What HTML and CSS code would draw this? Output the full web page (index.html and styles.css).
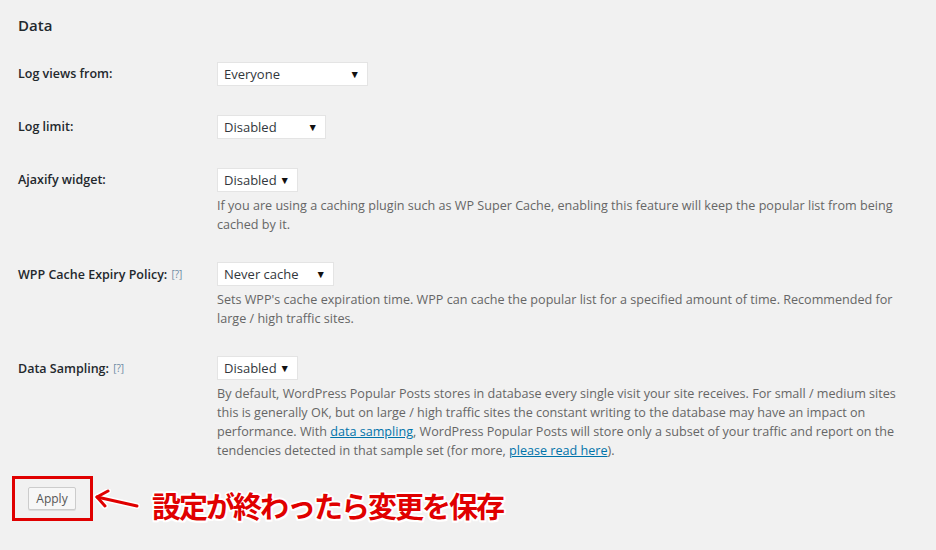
FILE: index.html
```html
<!DOCTYPE html>
<html lang="en">
<head>
<meta charset="utf-8">
<title>Data settings</title>
<link rel="stylesheet" href="styles.css">
</head>
<body>
<div class="page">
  <h3 class="section-title">Data</h3>

  <div class="row">
    <div class="label">Log views from:</div>
    <div class="field">
      <div class="select sel-everyone"><span>Everyone</span><span class="caret">▼</span></div>
    </div>
  </div>

  <div class="row">
    <div class="label">Log limit:</div>
    <div class="field">
      <div class="select sel-limit"><span>Disabled</span><span class="caret">▼</span></div>
    </div>
  </div>

  <div class="row">
    <div class="label">Ajaxify widget:</div>
    <div class="field">
      <div class="select sel-short"><span>Disabled</span><span class="caret">▼</span></div>
      <p class="description">If you are using a caching plugin such as WP Super Cache, enabling this feature will keep the popular list from being cached by it.</p>
    </div>
  </div>

  <div class="row">
    <div class="label">WPP Cache Expiry Policy: <span class="help">[?]</span></div>
    <div class="field">
      <div class="select sel-cache"><span>Never cache</span><span class="caret">▼</span></div>
      <p class="description">Sets WPP's cache expiration time. WPP can cache the popular list for a specified amount of time. Recommended for large / high traffic sites.</p>
    </div>
  </div>

  <div class="row">
    <div class="label">Data Sampling: <span class="help">[?]</span></div>
    <div class="field">
      <div class="select sel-short"><span>Disabled</span><span class="caret">▼</span></div>
      <p class="description">By default, WordPress Popular Posts stores in database every single visit your site receives. For small / medium sites this is generally OK, but on large / high traffic sites the constant writing to the database may have an impact on performance. With <a href="#">data sampling</a>, WordPress Popular Posts will store only a subset of your traffic and report on the tendencies detected in that sample set (for more, <a href="#">please read here</a>).</p>
    </div>
  </div>

  <div class="apply-row">
    <div class="highlight-box">
      <button class="button">Apply</button>
    </div>
    <svg class="arrow" width="46" height="24" viewBox="0 0 46 24">
      <g fill="none" stroke="#ffffff" stroke-width="6" stroke-linecap="round" stroke-linejoin="round">
        <path d="M43 17 L3 8"/>
        <path d="M14 2 L3 8 L11 17"/>
      </g>
      <g fill="none" stroke="#e00000" stroke-width="3" stroke-linecap="round" stroke-linejoin="round">
        <path d="M43 17 L3 8"/>
        <path d="M14 2 L3 8 L11 17"/>
      </g>
    </svg>
    <div class="note">設定が終わったら変更を保存</div>
  </div>
</div>
</body>
</html>
```

FILE: styles.css
```css
html, body {
  margin: 0;
  padding: 0;
  background: #f1f1f1;
}

body {
  font-family: "Open Sans", "Noto Sans", sans-serif;
  color: #23282d;
}

.page {
  width: 936px;
  height: 550px;
  padding: 15px 0 0 18px;
  box-sizing: border-box;
  overflow: hidden;
}

.section-title {
  margin: 0 0 12px;
  font-size: 15px;
  line-height: 20px;
  font-weight: 600;
  color: #23282d;
}

.row {
  display: grid;
  grid-template-columns: 199px 688px;
  padding: 15px 0 14px;
}

.label {
  font-size: 12.5px;
  font-weight: 600;
  line-height: 24px;
  color: #23282d;
}

.help {
  font-size: 10px;
  font-weight: 400;
  color: #6d8aa3;
  margin-left: 1px;
  vertical-align: 1px;
}

.select {
  display: flex;
  align-items: center;
  justify-content: space-between;
  height: 24px;
  box-sizing: border-box;
  background: #fff;
  border: 1px solid #e4e4e4;
  padding: 0 7px 0 6px;
  font-size: 13px;
  color: #32373c;
}

.caret {
  font-size: 10.5px;
  color: #111;
}

.sel-everyone { width: 151px; }
.sel-limit { width: 109px; }
.sel-short { width: 81px; }
.sel-cache { width: 117px; }

.description {
  margin: 4px 0 -1px;
  font-size: 12.6px;
  line-height: 19px;
  color: #666;
}

.description a {
  color: #0073aa;
  text-decoration: underline;
}

.apply-row {
  display: flex;
  align-items: center;
  margin: 3px 0 0 -6px;
}

.highlight-box {
  width: 81px;
  height: 45px;
  box-sizing: border-box;
  border: 3px solid #e00000;
  display: flex;
  align-items: center;
  justify-content: center;
  padding-right: 1px;
}

.button {
  width: 48px;
  height: 23px;
  padding: 0;
  font-family: "Open Sans", sans-serif;
  font-size: 12px;
  color: #555;
  background: #f7f7f7;
  border: 1px solid #ccc;
  border-radius: 2px;
  box-shadow: 0 1px 0 #ddd;
}

.arrow {
  margin: 4px 0 0 1px;
}

.note {
  margin: 12px 0 0 12px;
  font-family: "Noto Sans CJK JP", sans-serif;
  font-weight: 700;
  font-size: 29px;
  letter-spacing: -2px;
  line-height: 32px;
  color: #e00000;
  text-shadow:
    2px 0 0 #fff, -2px 0 0 #fff, 0 2px 0 #fff, 0 -2px 0 #fff,
    1.5px 1.5px 0 #fff, -1.5px 1.5px 0 #fff, 1.5px -1.5px 0 #fff, -1.5px -1.5px 0 #fff;
}
```
